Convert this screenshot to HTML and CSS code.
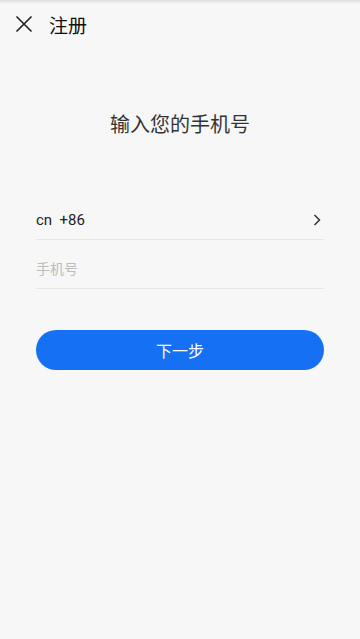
FILE: index.html
```html
<!DOCTYPE html>
<html lang="zh">
<head>
<meta charset="utf-8">
<link rel="stylesheet" href="styles.css">
</head>
<body>
<div class="shade"></div>
<header class="bar">
  <svg class="close" viewBox="0 0 18 18" width="18" height="18"><path d="M1.5 1.5L16.5 16.5M16.5 1.5L1.5 16.5" stroke="#222" stroke-width="1.6" fill="none"/></svg>
  <span class="title">注册</span>
</header>
<main class="content">
  <h1 class="heading">输入您的手机号</h1>
  <div class="row country">
    <span>cn&nbsp;&nbsp;+86</span>
    <svg class="chev" viewBox="0 0 8 12" width="8" height="12"><path d="M1.5 1L6.5 6L1.5 11" stroke="#333" stroke-width="1.5" fill="none"/></svg>
  </div>
  <div class="row phone"><span class="ph">手机号</span></div>
  <button class="next">下一步</button>
</main>
</body>
</html>
```
FILE: styles.css
```css
html, body { margin: 0; padding: 0; }
body {
  width: 360px; height: 639px; background: #f7f7f7; position: relative;
  font-family: Roboto, "Noto Sans CJK SC", sans-serif; color: #222; overflow: hidden;
}
.shade {
  position: absolute; left: 0; top: 0; width: 100%; height: 4px;
  background: linear-gradient(#dcdcdc, rgba(247,247,247,0));
}
.bar { height: 48px; display: flex; align-items: center; padding-left: 15px; }
.close { display: block; }
.title { margin-left: 16px; font-size: 19px; color: #111; }
.content { padding: 0 36px; display: flex; flex-direction: column; }
.heading {
  margin: 62px 0 0; font-size: 20px; font-weight: normal; text-align: center; color: #333; line-height: 30px;
}
.row {
  box-sizing: border-box; display: flex; align-items: center; justify-content: space-between;
  border-bottom: 1px solid #e6e6e6; font-size: 14px; line-height: 20px;
}
.country { margin-top: 50px; height: 50px; padding: 10px 3px 0 0; font-size: 15px; }
.phone { height: 49px; padding-top: 10px; }
.ph { color: #bcbcbc; }
.next {
  margin-top: 41px; height: 40px; border: none; border-radius: 20px; background: #1670f4;
  color: #fff; font-size: 16px; font-family: inherit; width: 100%;
}
```
